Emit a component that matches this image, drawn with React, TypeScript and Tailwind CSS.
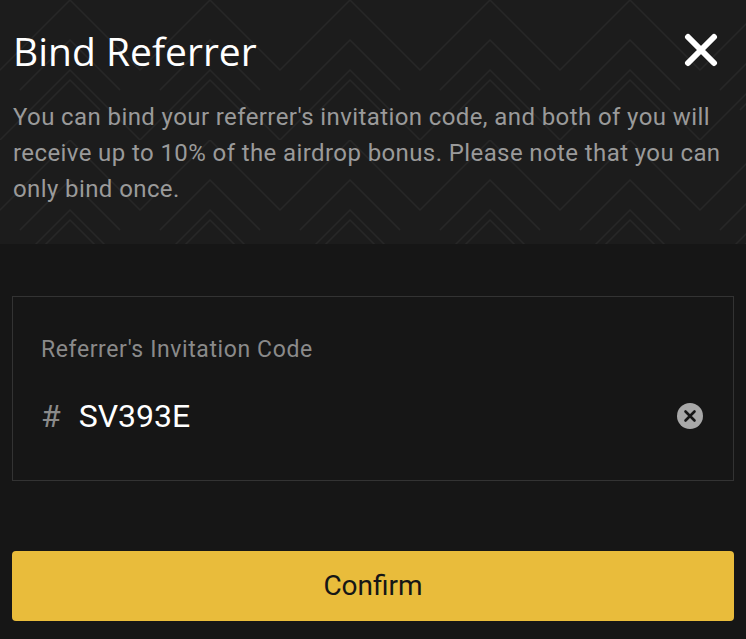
import React from "react";

function Pattern() {
  return (
    <svg className="absolute inset-0 h-full w-full" xmlns="http://www.w3.org/2000/svg">
      <defs>
        <pattern id="chev" width="140" height="140" patternUnits="userSpaceOnUse">
          <g fill="none" stroke="#272727" strokeWidth="1.5">
            <polyline points="0,70 70,0 140,70" />
            <polyline points="20,90 70,40 120,90" />
            <polyline points="0,140 70,70 140,140" />
            <polyline points="40,110 70,80 100,110" />
            <polyline points="-70,140 0,70" />
            <polyline points="140,70 210,140" />
          </g>
        </pattern>
      </defs>
      <rect width="100%" height="100%" fill="url(#chev)" />
    </svg>
  );
}

export default function App() {
  return (
    <div
      className="w-[746px] h-[639px] bg-[#161616] overflow-hidden"
      style={{ fontFamily: "Roboto, 'Liberation Sans', sans-serif" }}
    >
      <div className="relative h-[244px] bg-[#1c1c1c]">
        <Pattern />
        <div className="relative pl-[13px] pr-[10px] pt-[24px]">
          <div className="flex items-center justify-between h-[52px]">
            <h1
              className="text-[39px] leading-none text-white"
              style={{ fontFamily: "'Open Sans', 'Noto Sans', sans-serif" }}
            >
              Bind Referrer
            </h1>
            <svg width="34" height="34" viewBox="0 0 34 34" className="mr-[18px]">
              <path d="M4 4 L30 30 M30 4 L4 30" stroke="#fff" strokeWidth="6" strokeLinecap="round" />
            </svg>
          </div>
          <p className="mt-[23px] text-[24px] leading-[36px] tracking-[0.4px] text-[#9a9a9a]">
            You can bind your referrer's invitation code, and both of you will receive up to 10% of the airdrop bonus. Please note that you can only bind once.
          </p>
        </div>
      </div>
      <div className="px-[12px] pt-[52px]">
        <div className="border border-[#333333] h-[185px] px-[28px] flex flex-col">
          <div className="mt-[39px] text-[23px] leading-[28px] tracking-[0.6px] text-[#8a8a8a]">
            Referrer's Invitation Code
          </div>
          <div className="mt-[36px] flex items-center justify-between">
            <div className="flex items-center gap-[18px]">
              <span className="text-[32px] leading-none text-[#8a8a8a]">#</span>
              <span className="text-[32px] leading-none text-white">SV393E</span>
            </div>
            <svg width="26" height="26" viewBox="0 0 26 26" className="mr-[2px]">
              <circle cx="13" cy="13" r="13" fill="#a8a8a8" />
              <path d="M8.5 8.5 L17.5 17.5 M17.5 8.5 L8.5 17.5" stroke="#161616" strokeWidth="2.6" strokeLinecap="round" />
            </svg>
          </div>
        </div>
        <button className="mt-[70px] w-full h-[70px] rounded-[4px] bg-[#e9bc3b] text-[28px] text-[#161616]">
          Confirm
        </button>
      </div>
    </div>
  );
}
